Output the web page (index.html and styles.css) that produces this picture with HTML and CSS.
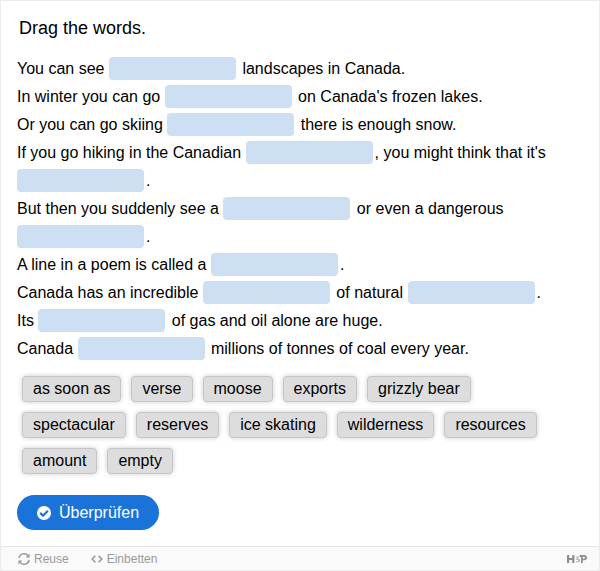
FILE: index.html
```html
<!DOCTYPE html>
<html lang="en">
   <head>
      <meta charset="UTF-8" />
      <meta name="viewport" content="width=device-width, initial-scale=1.0"/>
      <title>Drag the words</title>
      <link rel="stylesheet" href="styles.css">
   </head>
   <body>
      <div class="frame">
         <main class="content">
            <p class="intro">Drag the words.</p>
            <div class="sentences">
               <p>You can see <span class="dropzone"></span> landscapes in Canada.</p>
               <p>In winter you can go <span class="dropzone"></span> on Canada's frozen lakes.</p>
               <p>Or you can go skiing <span class="dropzone"></span> there is enough snow.</p>
               <p>If you go hiking in the Canadian <span class="dropzone"></span>, you might think that it's <span class="dropzone"></span>.</p>
               <p>But then you suddenly see a <span class="dropzone"></span> or even a dangerous <span class="dropzone"></span>.</p>
               <p>A line in a poem is called a <span class="dropzone"></span>.</p>
               <p>Canada has an incredible <span class="dropzone"></span> of natural <span class="dropzone"></span>.</p>
               <p>Its <span class="dropzone"></span> of gas and oil alone are huge.</p>
               <p>Canada <span class="dropzone"></span> millions of tonnes of coal every year.</p>
            </div>
            <div class="words">
               <button type="button" class="word" draggable="true">as soon as</button>
               <button type="button" class="word" draggable="true">verse</button>
               <button type="button" class="word" draggable="true">moose</button>
               <button type="button" class="word" draggable="true">exports</button>
               <button type="button" class="word" draggable="true">grizzly bear</button>
               <button type="button" class="word" draggable="true">spectacular</button>
               <button type="button" class="word" draggable="true">reserves</button>
               <button type="button" class="word" draggable="true">ice skating</button>
               <button type="button" class="word" draggable="true">wilderness</button>
               <button type="button" class="word" draggable="true">resources</button>
               <button type="button" class="word" draggable="true">amount</button>
               <button type="button" class="word" draggable="true">empty</button>
            </div>
            <button type="button" class="check-button">
               <svg width="14" height="14" viewBox="0 0 14 14" aria-hidden="true">
                  <circle cx="7" cy="7" r="7" fill="#fff"/>
                  <path d="M3.2 6.9l2.8 2.8 4.9-4.9" fill="none" stroke="#1a73d9" stroke-width="2.2"/>
               </svg>
               Überprüfen
            </button>
         </main>
         <footer class="actions">
            <button type="button" class="action">
               <svg width="12" height="12" viewBox="0 0 12 12" fill="none" stroke="currentColor" stroke-width="1.4" aria-hidden="true">
                  <path d="M.9 5A5.2 5.2 0 0 1 10 2.6M11.1 7A5.2 5.2 0 0 1 2 9.4"/>
                  <path d="M11.6 .6v4h-4zM.4 11.4v-4h4z" fill="currentColor" stroke="none"/>
               </svg>
               Reuse
            </button>
            <button type="button" class="action">
               <svg width="12" height="12" viewBox="0 0 12 12" fill="none" stroke="currentColor" stroke-width="1.6" aria-hidden="true">
                  <path d="M4.4 2.8L1.2 6l3.2 3.2M7.6 2.8L10.8 6 7.6 9.2"/>
               </svg>
               Einbetten
            </button>
            <a class="logo" href="#" aria-label="H5P">
               <svg width="20" height="8" viewBox="0 0 20 8" fill="#8f8f8f" aria-hidden="true">
                  <path d="M0 0h2.2v3h3V0h2.2v8H5.2V5h-3v3H0z"/>
                  <path d="M9.6 1.6h3v1h-2v1.2c1.6-.2 2.4.4 2.4 1.6 0 1.4-1.4 2.2-4 1.8v-1c1.6.2 2.4 0 2.4-.8 0-.6-.8-.8-2.2-.5z" opacity=".7"/>
                  <path fill-rule="evenodd" d="M12.8 0h4.4C19 0 20 1 20 2.6s-1 2.7-2.8 2.7h-1.4V8H14V2h-1.2zM15.8 1.7v2h1.2c1.3 0 1.3-2 0-2z"/>
               </svg>
            </a>
         </footer>
      </div>
   </body>
</html>
```

FILE: styles.css
```css
* {
box-sizing: border-box;
}
body {
margin: 0;
font-family: "Liberation Sans", Arial, sans-serif;
font-size: 16px;
color: #000;
background-color: #fff;
}
button {
font: inherit;
cursor: pointer;
}
.frame {
display: flex;
flex-direction: column;
min-height: 100vh;
border: 1px solid #ebebeb;
}
.content {
flex: 1;
padding: 16px;
}
.intro {
margin: 0 2px 16px;
font-size: 18px;
line-height: 22px;
}
.sentences p {
margin: 0;
line-height: 28px;
}
.dropzone {
display: inline-block;
width: 127px;
height: 23px;
margin-right: 2px;
vertical-align: -6px;
background-color: #cddff3;
border-radius: 4px;
}
.words {
display: flex;
flex-wrap: wrap;
gap: 10px;
padding: 13px 5px 21px;
}
.word {
height: 26px;
padding: 0 10px;
color: #000;
line-height: 24px;
background-color: #ddd;
border: 1px solid #c6c6c6;
border-radius: 4px;
box-shadow: 0 0 5px rgba(0,0,0,0.2);
cursor: grab;
}
.check-button {
display: flex;
align-items: center;
gap: 8px;
height: 35px;
padding: 0 20px;
color: #fff;
background-color: #1a73d9;
border: none;
border-radius: 18px;
}
.actions {
display: flex;
align-items: center;
gap: 22px;
height: 24px;
padding: 0 12px 0 17px;
background-color: #fafafa;
border-top: 1px solid #e6e6e6;
}
.action {
display: flex;
align-items: center;
gap: 4px;
padding: 0;
color: #999;
font-size: 12px;
background: none;
border: none;
}
.logo {
display: flex;
margin-left: auto;
}
```
